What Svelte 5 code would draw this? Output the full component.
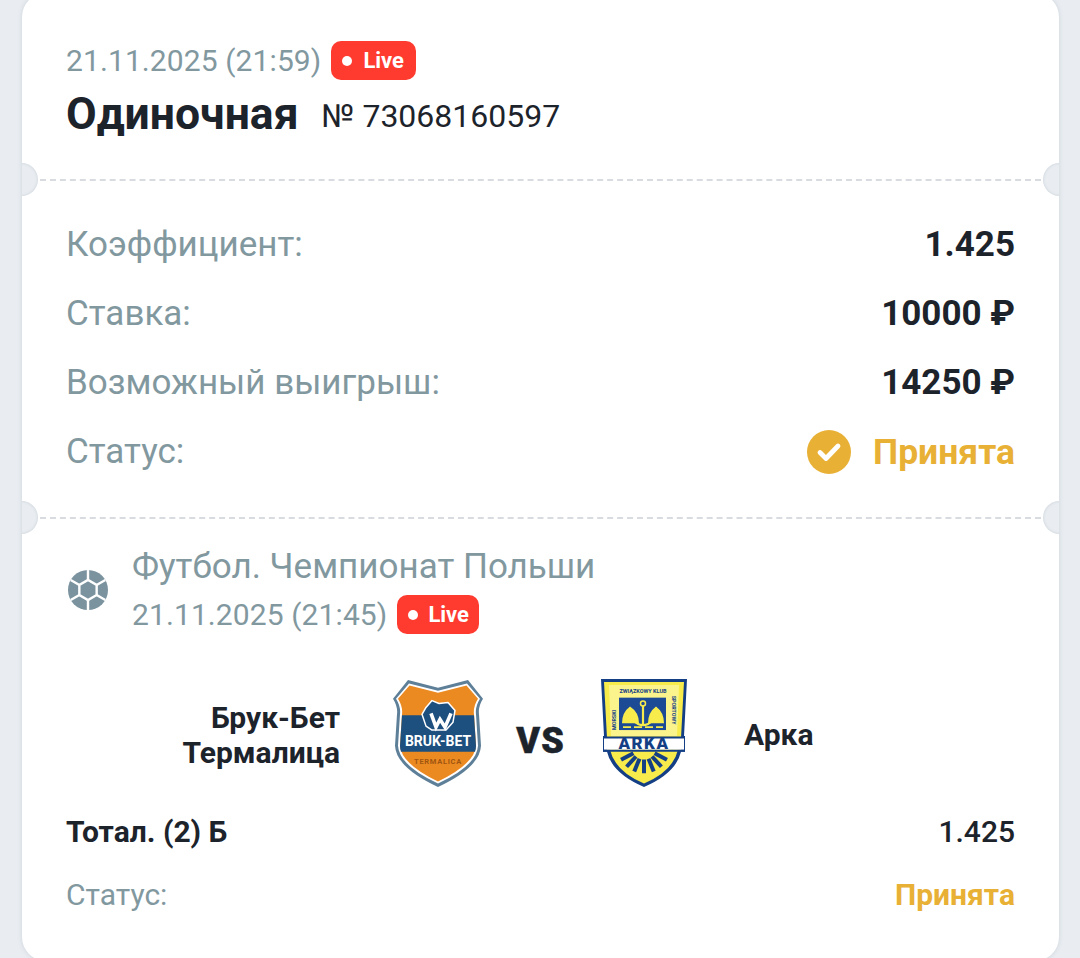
<script>
  const rows = [
    { label: 'Коэффициент:', value: '1.425' },
    { label: 'Ставка:', value: '10000 ₽' },
    { label: 'Возможный выигрыш:', value: '14250 ₽' }
  ];
  const spokes = [30, 90, 150, 210, 270, 330].map((a) => {
    const r = (a * Math.PI) / 180;
    return { x1: 20 + 10 * Math.cos(r), y1: 20 + 10 * Math.sin(r), x2: 20 + 22 * Math.cos(r), y2: 20 + 22 * Math.sin(r) };
  });
  const hex = spokes.map((s) => `${s.x1},${s.y1}`).join(' ');
  const rays = [-62, -42, -22, 0, 22, 42, 62].map((a) => {
    const r = (a * Math.PI) / 180;
    return { x1: 53 + 12 * Math.sin(r), y1: 78 + 12 * Math.cos(r), x2: 53 + 26 * Math.sin(r), y2: 78 + 26 * Math.cos(r) };
  });
</script>

<div class="page">
  <div class="card">
    <section class="head">
      <div class="dateline">
        <span class="date">21.11.2025 (21:59)</span>
        <span class="live first"><i></i>Live</span>
      </div>
      <div class="titleline">
        <span class="title">Одиночная</span>
        <span class="num">№ 73068160597</span>
      </div>
    </section>

    <div class="divider"><b class="notch left"></b><b class="notch right"></b></div>

    <section class="summary">
      {#each rows as r}
        <div class="row"><span class="label">{r.label}</span><span class="value">{r.value}</span></div>
      {/each}
      <div class="row">
        <span class="label">Статус:</span>
        <span class="status">
          <svg width="44" height="44" viewBox="0 0 44 44"><circle cx="22" cy="22" r="22" fill="#e8b035"/><path d="M13 22.5l6 6 12-12.5" fill="none" stroke="#fff" stroke-width="4.8" stroke-linecap="round" stroke-linejoin="round"/></svg>
          Принята
        </span>
      </div>
    </section>

    <div class="divider"><b class="notch left"></b><b class="notch right"></b></div>

    <section class="event">
      <div class="league">
        <svg class="ball" width="40" height="40" viewBox="0 0 40 40">
          <defs><clipPath id="ballclip"><circle cx="20" cy="20" r="20"/></clipPath></defs>
          <circle cx="20" cy="20" r="20" fill="#7b939f"/>
          <g clip-path="url(#ballclip)" stroke="#fff" stroke-width="2.4">
            {#each spokes as s}<line x1={s.x1} y1={s.y1} x2={s.x2} y2={s.y2}/>{/each}
            <polygon points={hex} fill="#7b939f"/>
          </g>
        </svg>
        <div>
          <div class="lname">Футбол. Чемпионат Польши</div>
          <div class="dateline second">
            <span class="date">21.11.2025 (21:45)</span>
            <span class="live tight"><i></i>Live</span>
          </div>
        </div>
      </div>

      <div class="match">
        <div class="team home">Брук-Бет<br />Термалица</div>
        <svg class="bruk" width="92" height="108" viewBox="13 8 92 110" preserveAspectRatio="none">
          <path d="M28 9 L58 17 L88 9 L103 28 Q98 36 99 44 L101 76 Q100 98 58 118 Q16 98 15 76 L17 44 Q18 36 13 28 Z" fill="#5e7f98"/>
          <path d="M29 12.500 L58 20 L87 12.500 L100 28 Q95 36 96 44 L98 76 Q97 96 58 114.500 Q19 96 18 76 L20 44 Q21 36 16 28 Z" fill="#fff"/>
          <path d="M29.500 14.500 L58 22 L86.500 14.500 L98 28 Q93 36 94 44 L96 76 Q95 94 58 112.500 Q21 94 20 76 L22 44 Q23 36 18 28 Z" fill="#ec8a22"/>
          <path d="M22 45 H94 L96 76 Q96 79 95 82 H21 Q20 79 20 76 Z" fill="#1d4f7f"/>
          <path d="M46 56 L42 44 L46 37 L52 30 L59 33 L68 32 L75 40 L73 52 L66 60 L52 60 Z" fill="#1d4f7f" stroke="#fff" stroke-width="1.5" stroke-linejoin="round"/>
          <path d="M51 43 L56 57 L60 49 L65 57 L71 43" fill="none" stroke="#fff" stroke-width="3.6"/>
          <text x="58" y="76" text-anchor="middle" class="brukt">BRUK-BET</text>
          <text x="58" y="95" text-anchor="middle" class="brukt2">TERMALICA</text>
        </svg>
        <span class="vs">VS</span>
        <svg class="arka" width="88" height="108" viewBox="9 8 88 110" preserveAspectRatio="none">
          <path d="M10 8 H96 L93 66 H94 V82 H90 Q85 104 53 118 Q21 104 16 82 H12 V66 H13 Z" fill="#143f85"/>
          <path d="M13 11 H93 L90 68 V80 H87 Q82 102 53 114.500 Q24 102 19 80 H16 V68 Z" fill="#f8ec4c"/>
          <path d="M18 14 H88 L86 66 H20 Z" fill="#fbf48c"/>
          <rect x="28" y="27" width="47" height="33" fill="#1c4a94"/>
          <path d="M52 35 V55 M42 50 Q52 60 62 50" stroke="#f8ec4c" stroke-width="2.2" fill="none"/>
          <circle cx="52" cy="33" r="2.500" fill="none" stroke="#f8ec4c" stroke-width="1.500"/>
          <path d="M31 53 Q31 42 39 36 Q48 42 48 53 Z M57 53 Q57 42 65 36 Q73 42 73 53 Z" fill="#f8ec4c"/>
          <path d="M32 57 H72" stroke="#f8ec4c" stroke-width="1.800" stroke-dasharray="8 3"/>
          <path d="M13 67.500 H93 V80 H13 Z" fill="#fff"/>
          <path d="M12 67.500 H94 M12 81 H94" stroke="#143f85" stroke-width="2"/>
          {#each rays as s}<line x1={s.x1} y1={s.y1} x2={s.x2} y2={s.y2} stroke="#143f85" stroke-width="4"/>{/each}
          <text x="52" y="22" text-anchor="middle" class="arkas">ZWIĄZKOWY KLUB</text>
          <text transform="translate(25 60) rotate(-90)" class="arkas">MORSKI</text>
          <text transform="translate(81 25) rotate(90)" class="arkas">SPORTOWY</text>
          <text x="53" y="79.500" text-anchor="middle" class="arkat">ARKA</text>
        </svg>
        <div class="team away">Арка</div>
      </div>

      <div class="bet"><span>Тотал. (2) Б</span><span class="coef">1.425</span></div>
      <div class="betstatus"><span class="slabel">Статус:</span><span class="sval">Принята</span></div>
    </section>
  </div>
</div>

<style>
  :global(body) { margin: 0; background: #e9edf2; }
  .page {
    height: 958px;
    overflow: hidden;
    background: #e9edf2;
    font-family: Roboto, "Liberation Sans", sans-serif;
  }
  .card {
    margin: -7px 21px 0 22px;
    height: 968px;
    background: #fff;
    border-radius: 24px;
    box-shadow: 0 0 4px rgba(120, 135, 150, 0.25);
  }
  .head { height: 186px; box-sizing: border-box; padding: 48px 44px 0; }
  .dateline { display: flex; align-items: center; gap: 10px; height: 39px; }
  .date { font-size: 30px; color: #82989f; letter-spacing: 0.1px; }
  .live {
    display: inline-flex;
    align-items: center;
    gap: 11px;
    height: 39px;
    padding: 0 11px;
    box-sizing: border-box;
    background: #ff3b30;
    border-radius: 10px;
    color: #fff;
    font-size: 22px;
    font-weight: 700;
  }
  .first { padding-right: 12px; }
  .tight { gap: 10px; padding-right: 10px; }
  .live i { width: 10px; height: 10px; border-radius: 50%; background: #fff; }
  .titleline { display: flex; align-items: center; gap: 23px; margin-top: 6px; color: #1d232b; }
  .title { font-size: 44.5px; font-weight: 700; line-height: 56px; }
  .num { font-size: 32px; margin-top: 3px; }

  .divider { position: relative; height: 0; border-top: 2px dashed #d8dce0; margin: 0 18px; }
  .notch {
    position: absolute;
    top: -18px;
    width: 33px;
    height: 33px;
    border-radius: 50%;
    background: #e9edf2;
    box-shadow: inset 0 0 3px rgba(120, 135, 150, 0.3);
  }
  .left { left: -35px; clip-path: inset(0 0 0 17px); }
  .right { right: -35px; clip-path: inset(0 17px 0 0); }

  .summary { height: 336px; box-sizing: border-box; padding: 29px 44px 0; }
  .row { display: flex; justify-content: space-between; align-items: center; height: 69px; }
  .label { font-size: 35px; color: #82989f; }
  .value { font-size: 35px; font-weight: 700; color: #1d232b; }
  .status { display: flex; align-items: center; gap: 22px; font-size: 35.5px; font-weight: 700; color: #e8b035; }

  .event { padding: 26px 44px 0; }
  .league { display: flex; align-items: center; gap: 24px; padding-left: 2px; }
  .ball { flex: none; }
  .lname { font-size: 35px; line-height: 44px; color: #82989f; }
  .second { margin-top: 6px; }

  .match {
    display: grid;
    grid-template-columns: 327px 92px 115px 88px 1fr;
    align-items: center;
    justify-items: center;
    margin-top: 45px;
  }
  .team { font-size: 30px; font-weight: 700; line-height: 35px; color: #1d232b; }
  .home { justify-self: end; text-align: right; margin-right: 53px; }
  .away { justify-self: start; margin-left: 56px; }
  .vs { font-size: 36px; font-weight: 900; color: #1d232b; letter-spacing: 1px; margin: 12px 4px 0 0; -webkit-text-stroke: 0.5px #1d232b; }
  .bruk, .arka { display: block; margin-bottom: 3px; }
  .brukt { font: 700 14px Roboto, sans-serif; fill: #fff; }
  .brukt2 { font: 700 7.5px Roboto, sans-serif; fill: #a0560f; letter-spacing: 0.7px; }
  .arkas { font: 700 5.5px Roboto, sans-serif; fill: #143f85; }
  .arkat { font: 900 17px Roboto, sans-serif; fill: #143f85; letter-spacing: 1.5px; }

  .bet {
    display: flex;
    justify-content: space-between;
    margin-top: 24px;
    font-size: 30px;
    font-weight: 700;
    line-height: 36px;
    color: #1d232b;
  }
  .coef { font-weight: 500; }
  .betstatus { display: flex; justify-content: space-between; margin-top: 27px; font-size: 30px; line-height: 36px; }
  .slabel { color: #82989f; }
  .sval { color: #e8b035; font-weight: 700; }
</style>
